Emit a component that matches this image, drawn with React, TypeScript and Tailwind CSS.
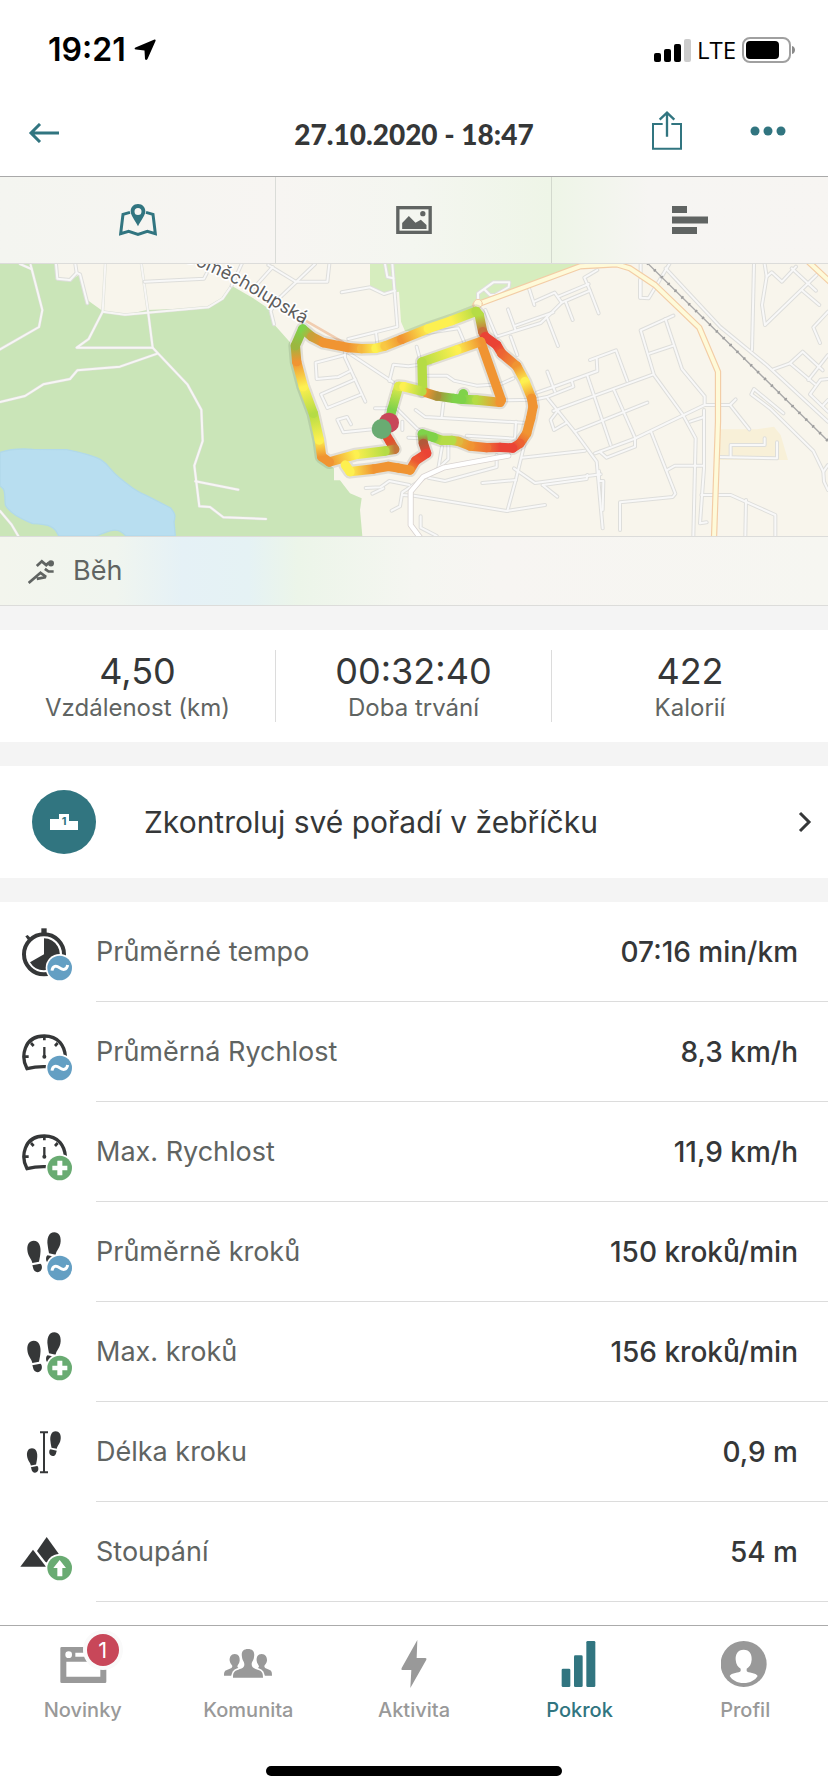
import React from 'react';

type RoutePoint = [number, number, string];

const FOREST_PATHS = [
  '0,283 117,216 127,165 92,30',
  '60,27 94,42',
  '0,441 75,423 130,388 210,372 232,346 360,335 472,296',
  '316,27 308,170 266,252 230,278 458,278 472,293 562,388 604,464 608,558 583,632 598,754 630,756 670,787 798,792',
  '586,679 715,704',
  '308,170 375,179 625,157 668,131 695,92',
  '424,27 445,176 458,278',
  '0,768 34,808 56,845',
];

const STREETS = [
  '168,27 172,71 210,75 230,54 240,58 262,145',
  '226,27 230,54',
  '434,80 612,71 620,55',
  '725,27 695,92',
  '805,30 887,80 982,80 988,27',
  '945,27 832,135 812,168 822,208',
  '818,36 765,95',
  '1025,112 1110,97 1152,117 1185,107',
  '1155,27 1162,66 1180,70',
  '1177,27 1192,215 1045,252',
  '1128,232 1132,265',
  '1035,300 947,323 950,372 1015,366 1053,347',
  '1035,290 1035,308 1096,440',
  '1066,373 963,418 982,459 1084,418',
  '1040,290 1180,382',
  '1168,378 1180,329 1225,334 1270,328 1290,325',
  '1053,508 1041,486 1012,494 1030,532 1125,522',
  '1125,460 1190,460 1250,520 1290,545',
  '1207,500 1207,525',
  '1225,548 1260,550',
  '1097,699 1141,697 1168,678 1228,690',
  '1117,716 1150,700',
  '1175,767 1200,754 1207,712 1315,640 1345,612 1345,570',
  '1207,720 1242,722 1520,768 1635,750',
  '1242,240 1375,220 1392,260',
  '1250,275 1258,305 1258,330',
  '1284,362 1340,362 1362,377 1430,392 1500,388 1540,370',
  '1247,465 1275,486 1570,503',
  '1330,445 1325,486',
  '1400,542 1545,551 1548,500',
  '1315,640 1326,575',
  '1262,784 1262,818 1310,843',
  '1434,145 1434,115 1480,82 1528,82 1526,96 1485,120 1470,120 1455,105',
  '1587,100 1603,150',
  '1603,140 1664,113 1685,143 1658,170 1622,204 1490,245',
  '1524,163 1547,226',
  '1547,212 1660,172',
  '1532,245 1552,300',
  '1456,165 1490,245',
  '1792,45 1753,68 1770,107 1796,175',
  '1675,125 1766,87',
  '1685,143 1770,107',
  '1697,140 1718,195',
  '1640,185 1674,273',
  '1922,27 1922,128 1946,130 2008,27',
  '1920,75 1920,128',
  '1512,436 1600,434 1644,425 1720,395 1716,380',
  '1610,413 1660,396 1792,348 1790,310',
  '1770,315 1848,286 1882,378',
  '1642,350 1665,410',
  '1660,468 1785,422 1960,358',
  '1643,430 1724,530 1790,620 1808,820',
  '1700,503 1662,525 1652,495 1675,465',
  '1762,362 1832,570',
  '1842,405 1906,550',
  '1724,530 1942,443',
  '2020,182 1922,226 1962,360 2048,478 2087,550 2080,843',
  '1996,192 2046,342 2114,424 2114,450 1902,552 1785,595',
  '1948,296 2020,272',
  '1953,530 2026,716 2018,726 1860,742 1860,825',
  '1800,590 1820,608 1905,575 1905,552',
  '1542,640 1605,684 1802,658',
  '1628,690 1760,672 1762,660',
  '1565,608 1755,587',
  '1628,690 1672,725',
  '1797,648 1797,678 1810,678 1808,765',
  '1575,560 1548,672 1522,768',
  '1447,684 1548,675',
  '1490,600 1490,636 1335,678 1285,668',
  '2114,450 2190,450 2248,523',
  '2190,450 2207,433',
  '2112,465 2112,640 2100,805 2120,802',
  '2070,500 2112,486',
  '2000,646 2025,632 2112,632',
  '2104,720 2192,720 2326,780 2326,843',
  '2238,735 2236,843',
  '2154,606 2331,610 2331,562',
  '2192,605 2192,570 2294,570 2294,550',
  '2262,27 2256,285',
  '1997,40 2160,215 2300,330 2484,500',
  '2294,27 2300,65 2286,150 2295,210 2450,60',
  '2300,65 2315,52 2346,80 2388,35',
  '2375,40 2448,107',
  '2405,105 2458,150',
  '2484,170 2440,217 2460,264',
  '2320,343 2370,325 2408,290 2468,346',
  '2370,325 2445,388',
  '2425,375 2484,300',
  '2484,372 2462,374 2430,418 2484,470',
  '2470,450 2484,435',
  '2470,650 2440,588 2310,460 2254,418 2262,402 2350,475',
  '2484,630 2470,650 2472,680 2484,705',
];

const MAIN_ROADS = [
  '1427,150 1740,34 1850,28 1890,40 1965,90 2098,218 2154,350 2154,500 2142,850',
  '2425,20 2500,90',
  '1427,150 1432,165',
];

const WHITE_ROADS = ['1525,602 1330,638 1270,665 1232,710 1232,810 1262,850'];

const GREEN = '#7fd24a';
const LIME = '#b5dc45';
const YELLOW = '#fdf050';
const ORANGE = '#f09432';
const RED = '#ea4335';

const OUTER_ROUTE: RoutePoint[] = [
  [345, 430, RED],
  [360, 455, '#e2502f'],
  [374, 478, '#c4763a'],
  [345, 483, LIME],
  [255, 494, YELLOW],
  [178, 516, ORANGE],
  [155, 500, ORANGE],
  [148, 450, YELLOW],
  [130, 370, LIME],
  [100, 290, YELLOW],
  [80, 215, ORANGE],
  [76, 167, '#9cb63f'],
  [98, 117, GREEN],
  [125, 140, '#c8a13a'],
  [160, 158, ORANGE],
  [235, 173, ORANGE],
  [275, 176, '#f6b83e'],
  [318, 175, YELLOW],
  [345, 168, '#f8c843'],
  [395, 148, ORANGE],
  [475, 116, YELLOW],
  [545, 92, YELLOW],
  [618, 64, LIME],
  [628, 76, LIME],
  [638, 125, '#c8703a'],
  [645, 140, RED],
  [680, 165, RED],
  [695, 190, '#ec6233'],
  [740, 228, ORANGE],
  [765, 275, YELLOW],
  [785, 325, ORANGE],
  [789, 350, ORANGE],
  [782, 385, ORANGE],
  [770, 430, ORANGE],
  [750, 460, '#ec6233'],
  [728, 474, RED],
  [690, 472, RED],
  [650, 473, '#ee7234'],
  [600, 468, ORANGE],
  [565, 454, '#e0b83e'],
  [545, 451, LIME],
  [515, 451, LIME],
  [490, 442, GREEN],
  [457, 432, GREEN],
  [460, 460, '#b3583a'],
  [470, 490, RED],
  [437, 512, '#ec5533'],
  [420, 540, ORANGE],
  [385, 534, ORANGE],
  [355, 529, ORANGE],
  [310, 537, ORANGE],
  [240, 545, YELLOW],
  [226, 525, YELLOW],
];

const INNER_ROUTE: RoutePoint[] = [
  [575, 326, GREEN],
  [580, 312, GREEN],
  [580, 328, GREEN],
  [620, 330, LIME],
  [690, 337, ORANGE],
  [694, 330, ORANGE],
  [632, 155, ORANGE],
  [560, 180, YELLOW],
  [456, 216, LIME],
  [458, 303, LIME],
];

const MIDDLE_ROUTE: RoutePoint[] = [
  [575, 328, GREEN],
  [550, 325, GREEN],
  [500, 318, '#a98f38'],
  [468, 308, ORANGE],
];

const START_ROUTE: RoutePoint[] = [
  [360, 385, GREEN],
  [366, 358, GREEN],
  [386, 289, '#dfe94b'],
  [402, 290, YELLOW],
  [456, 304, LIME],
];

const RouteLine: React.FC<{ id: string; points: RoutePoint[] }> = ({ id, points }) => (
  <g fill="none" strokeLinecap="round" strokeLinejoin="round">
    {points.slice(1).map((to, i) => {
      const from = points[i];
      return (
        <g key={i}>
          <linearGradient id={`${id}-${i}`} gradientUnits="userSpaceOnUse" x1={from[0]} y1={from[1]} x2={to[0]} y2={to[1]}>
            <stop offset="0" stopColor={from[2]} />
            <stop offset="1" stopColor={to[2]} />
          </linearGradient>
          <path d={`M${from[0]} ${from[1]}L${to[0]} ${to[1]}`} stroke={`url(#${id}-${i})`} strokeWidth="28" />
        </g>
      );
    })}
  </g>
);

const toLine = (points: RoutePoint[]) => points.map((p) => `${p[0]},${p[1]}`).join(' ');

const RouteMap: React.FC = () => (
  <svg viewBox="0 27 2484 816" preserveAspectRatio="xMidYMid slice" className="block h-[272px] w-full" role="img" aria-label="Mapa trasy">
    <rect y="27" width="2484" height="816" fill="#f8f5ec" />
    <path
      d="M0 27H165L172 71 210 75 238 60 262 135 308 168 375 180 440 165 625 158 668 131 695 92 760 130 812 165 822 208 870 262 890 360 940 480 960 610 1002 640V676H1020L1050 715 1085 730 1080 765 1087 843H0Z"
      fill="#cae5b8"
    />
    <path d="M1110 27H1750L1427 150V165L1242 228 1215 228 1203 200 1197 110 1152 117 1110 92Z" fill="#d6edbe" />
    <path
      d="M0 592C30 582 60 580 100 583L200 584C240 592 280 602 302 614C330 632 325 642 360 670C390 694 410 710 440 722L512 759C524 775 528 780 522 800L526 843H378C350 812 330 828 288 843H176C165 815 150 808 98 806C60 790 30 775 16 750C14 730 16 710 10 702L0 692Z"
      fill="#b8def0"
      stroke="#b1d9ea"
      strokeWidth="4"
    />
    <path d="M2160 523H2270L2322 515 2342 540 2364 615H2160Z" fill="#f8f0d8" />
    <g fill="none" strokeLinecap="round" strokeLinejoin="round">
      {FOREST_PATHS.map((p) => (
        <polyline key={p} points={p} stroke="#dcdfd6" strokeWidth="9" />
      ))}
      {FOREST_PATHS.map((p) => (
        <polyline key={p} points={p} stroke="#f7f6f5" strokeWidth="6" />
      ))}
      {STREETS.map((p) => (
        <polyline key={p} points={p} stroke="#dededb" strokeWidth="12" />
      ))}
      {STREETS.map((p) => (
        <polyline key={p} points={p} stroke="#f8f8f8" strokeWidth="6" />
      ))}
      {WHITE_ROADS.map((p) => (
        <g key={p}>
          <polyline points={p} stroke="#d9d3d0" strokeWidth="18" />
          <polyline points={p} stroke="#ffffff" strokeWidth="13" />
        </g>
      ))}
      <path d="M905 190L1030 262" stroke="#f1cdb0" strokeWidth="8" />
      {MAIN_ROADS.map((p) => (
        <polyline key={p} points={p} stroke="#f3cda6" strokeWidth="19" />
      ))}
      {MAIN_ROADS.map((p) => (
        <polyline key={p} points={p} stroke="#fefad9" strokeWidth="12" />
      ))}
      <circle cx="1434" cy="146" r="13" fill="#fefad9" stroke="#f3cda6" strokeWidth="3" />
      <path d="M1942 24L2484 558" stroke="#a9a9a9" strokeWidth="4" />
      <path d="M1942 24L2484 558" stroke="#9d9d9d" strokeWidth="9" strokeDasharray="5 24" strokeLinecap="butt" />
    </g>
    <path id="street" d="M450 -20C590 30 680 70 750 112S860 180 912 208" fill="none" />
    <text
      className="fill-[#5d5d5d] stroke-white font-['Inter',sans-serif] text-[54px]"
      strokeWidth="10"
      strokeLinejoin="round"
      paintOrder="stroke"
      textAnchor="end"
    >
      <textPath href="#street" startOffset="100%">
        Doměcholupská
      </textPath>
    </text>
    <g transform="translate(810 105)">
      <g fill="none" stroke="#000000" strokeOpacity="0.09" strokeWidth="42" strokeLinecap="round" strokeLinejoin="round">
        <polyline points={toLine(OUTER_ROUTE)} />
        <polyline points={toLine(INNER_ROUTE)} />
        <polyline points={toLine(START_ROUTE)} />
      </g>
      <RouteLine id="outer" points={OUTER_ROUTE} />
      <RouteLine id="inner" points={INNER_ROUTE} />
      <RouteLine id="middle" points={MIDDLE_ROUTE} />
      <path d="M352 375L372 300" stroke={RED} strokeWidth="6" />
      <RouteLine id="start" points={START_ROUTE} />
      <circle cx="357" cy="398" r="30" fill="#c84759" />
      <circle cx="335" cy="417" r="30" fill="#69ab72" />
    </g>
  </svg>
);

type BadgeKind = 'average' | 'max' | 'up';

const Badge: React.FC<{ kind: BadgeKind }> = ({ kind }) => (
  <g>
    <circle cx="179" cy="203" r="42" fill="#ffffff" />
    <circle cx="179" cy="203" r="37" fill={kind === 'average' ? '#649fc3' : '#69ab72'} />
    {kind === 'average' && (
      <path d="M156 211C158 196 169 195 178 202C188 210 200 210 203 194" fill="none" stroke="#ffffff" strokeWidth="9" />
    )}
    {kind === 'max' && <path d="M172 181H187V196H202V210H187V225H172V210H157V196H172Z" fill="#ffffff" />}
    {kind === 'up' && <path d="M179 179L198 203H187V228H172V203H160Z" fill="#ffffff" />}
  </g>
);

const Foot: React.FC<{ transform?: string }> = ({ transform }) => (
  <g transform={transform}>
    <path d="M101 121C118 121 124 140 121 160C120 170 118 178 117 184L97 188C95 175 83 168 82 148C81 132 88 121 101 121Z" />
    <path d="M97 195L121 190C125 191 127 200 125 206C122 216 110 218 104 212C99 208 100 202 97 195Z" />
  </g>
);

const PaceIcon = () => (
  <g>
    <circle cx="132" cy="162" r="60" fill="none" stroke="#353738" strokeWidth="12" />
    <path d="M132 162V114A48 48 0 1 1 90 186Z" />
    <path d="M124 84H140V102H124Z" />
    <path d="M76 108L83 104 91 112 84 119Z" />
  </g>
);

const SpeedIcon = () => (
  <g fill="none" stroke="#353738">
    <path d="M138 199Q108 198 81 205C62 170 70 107 133 107C176 107 194 138 196 168" strokeWidth="10" />
    <path d="M133 107V120M93 128L101 137M173 128L165 137M72 169H86" strokeWidth="8" />
    <path d="M133 140V168" strokeWidth="7" />
    <circle cx="133" cy="169" r="6" fill="#353738" stroke="none" />
  </g>
);

const StepsIcon = () => (
  <g>
    <Foot />
    <Foot transform="matrix(-1 0 0 1 264 -25)" />
  </g>
);

const StrideIcon = () => (
  <g>
    <Foot transform="matrix(0.78 0 0 0.78 17 49)" />
    <Foot transform="matrix(-0.79 0 0 0.79 247 -3)" />
    <path d="M120 93H144V99H135V213H144V219H120V213H129V99H120Z" />
  </g>
);

const ClimbIcon = () => (
  <g>
    <path d="M61 199L99 148 138 199Z" />
    <path d="M140 110L176 160 150 192 136 184 111 152Z" />
  </g>
);

interface Metric {
  label: string;
  value: string;
  Icon: React.FC;
  badge?: BadgeKind;
}

const METRICS: Metric[] = [
  { label: 'Průměrné tempo', value: '07:16 min/km', Icon: PaceIcon, badge: 'average' },
  { label: 'Průměrná Rychlost', value: '8,3 km/h', Icon: SpeedIcon, badge: 'average' },
  { label: 'Max. Rychlost', value: '11,9 km/h', Icon: SpeedIcon, badge: 'max' },
  { label: 'Průměrně kroků', value: '150 kroků/min', Icon: StepsIcon, badge: 'average' },
  { label: 'Max. kroků', value: '156 kroků/min', Icon: StepsIcon, badge: 'max' },
  { label: 'Délka kroku', value: '0,9 m', Icon: StrideIcon },
  { label: 'Stoupání', value: '54 m', Icon: ClimbIcon, badge: 'up' },
];

const SUMMARY = [
  { label: 'Vzdálenost (km)', value: '4,50' },
  { label: 'Doba trvání', value: '00:32:40' },
  { label: 'Kalorií', value: '422' },
];

const NAV_ITEMS = [
  {
    label: 'Novinky',
    badge: 1,
    icon: (
      <svg viewBox="86 45 144 144" className="size-12" fill="currentColor" fillRule="evenodd">
        <path d="M94 66H224Q228 66 228 70V170Q228 174 224 174H94Q90 174 90 170V70Q90 66 94 66ZM108 110V155H210V110ZM115 79A10 10 0 1 0 115 99A10 10 0 1 0 115 79ZM135 83V95H210V83Z" />
        <path d="M159 60H175V83H159Z" fill="#ffffff" />
      </svg>
    ),
  },
  {
    label: 'Komunita',
    icon: (
      <svg viewBox="582 45 144 144" className="size-12" fill="currentColor">
        <path d="M614 87C626 87 630 97 629 107C628 116 623 119 622 124C622 129 628 130 632 133L615 141C608 145 605 149 604 152H582C582 138 585 137 596 133C604 130 607 128 607 123C606 118 600 116 599 107C598 97 603 87 614 87Z" />
        <path d="M695 87C706 87 712 97 711 107C710 116 704 118 703 123C703 128 706 130 714 133C724 137 726 138 726 152H704C703 149 700 145 694 141L677 133C681 130 687 129 687 124C686 119 681 116 680 107C679 97 683 87 695 87Z" />
        <path
          d="M654 72C669 72 675 81 672 96C671 107 665 110 665 118C665 128 671 130 683 134C696 138 699 143 699 158H609C609 143 612 138 625 134C637 130 643 128 643 118C643 110 637 107 636 96C633 81 639 72 654 72Z"
          stroke="#ffffff"
          strokeWidth="10"
          paintOrder="stroke"
        />
      </svg>
    ),
  },
  {
    label: 'Aktivita',
    icon: (
      <svg viewBox="1078 45 144 144" className="size-12" fill="currentColor">
        <path d="M1160 45L1158 99H1184Q1189 99 1187 104L1139 189 1142 135H1115Q1110 135 1113 129Z" />
      </svg>
    ),
  },
  {
    label: 'Pokrok',
    active: true,
    icon: (
      <svg viewBox="467 45 144 144" className="size-12" fill="currentColor">
        <rect x="484" y="131" width="26" height="55" rx="4" />
        <rect x="521" y="91" width="26" height="95" rx="4" />
        <rect x="558" y="48" width="27" height="138" rx="4" />
      </svg>
    ),
  },
  {
    label: 'Profil',
    icon: (
      <svg viewBox="964 45 144 144" className="size-12" fill="currentColor">
        <circle cx="1032" cy="117" r="69" />
        <path
          d="M1032 74C1050 74 1057 88 1056 104C1055 118 1049 126 1041 131V138C1044 144 1070 143 1074 153C1066 166 1052 174 1032 174S998 166 990 153C994 143 1020 144 1023 138V131C1015 126 1009 118 1008 104C1007 88 1014 74 1032 74Z"
          fill="#ffffff"
        />
      </svg>
    ),
  },
];

const StatusBar: React.FC = () => (
  <div className="flex h-[100px] items-center justify-between pl-12 pr-8">
    <div className="flex items-center gap-2 text-[32px] leading-10 font-semibold text-black">
      <span>19:21</span>
      <svg viewBox="0 0 22 22" className="size-[22px]" fill="currentColor">
        <path d="M20.500 0.500Q22 0.200 21.500 2L13.500 20Q12 22 11 20L10.500 11.500 2 10.500Q-0.500 10 1.500 8.500Z" />
      </svg>
    </div>
    <div className="flex items-center gap-1.5 text-black">
      <svg viewBox="0 0 37 23" className="h-[23px] w-[37px]" fill="currentColor">
        <rect y="14" width="7" height="9" rx="2" />
        <rect x="10" y="10" width="7" height="13" rx="2" />
        <rect x="20" y="5" width="7" height="18" rx="2" />
        <rect x="30" width="7" height="23" rx="2" fill="#cccccc" />
      </svg>
      <span className="font-['Open_Sans',sans-serif] text-[24px] leading-8 font-medium">LTE</span>
      <svg viewBox="0 0 54 26" className="h-[26px] w-[54px]">
        <rect x="1" y="1" width="47" height="24" rx="7" fill="none" stroke="#a0a0a0" strokeWidth="2" />
        <rect x="4" y="4" width="33" height="18" rx="4" fill="#000000" />
        <path d="M50 9C54 10 54 16 50 17Z" fill="#8a8a8a" />
      </svg>
    </div>
  </div>
);

const App: React.FC = () => {
  return (
    <div className="flex min-h-screen flex-col bg-white font-['Inter',sans-serif] text-[#353738]">
      <StatusBar />

      <header className="grid h-[77px] grid-cols-[1fr_auto_1fr] items-start border-b border-[#a9a9a9] px-7 pt-[11px] text-[#317580]">
        <button type="button" aria-label="Zpět" className="flex h-11 items-center justify-self-start">
          <svg viewBox="0 0 32 20" className="h-5 w-8" fill="none" stroke="currentColor" strokeWidth="3">
            <path d="M31 10H4M12 1L3 10 12 19" />
          </svg>
        </button>
        <h1 className="font-['Lato',sans-serif] text-[28px] leading-[46px] font-black text-[#353738]">27.10.2020 - 18:47</h1>
        <div className="flex items-center justify-end gap-[68px] pr-3.5">
          <button type="button" aria-label="Sdílet">
            <svg viewBox="708 333 90 117" className="h-[39px] w-[30px]" fill="none" stroke="currentColor">
              <path d="M740 372H711V446H795V372H766" strokeWidth="6" />
              <path d="M753 410V340M731 359L753 338 775 359" strokeWidth="7" />
            </svg>
          </button>
          <button type="button" aria-label="Další možnosti">
            <svg viewBox="0 0 36 12" className="h-3 w-9" fill="currentColor">
              <circle cx="5" cy="6" r="4.500" />
              <circle cx="18" cy="6" r="4.500" />
              <circle cx="31" cy="6" r="4.500" />
            </svg>
          </button>
        </div>
      </header>

      <div className="grid h-[87px] grid-cols-3 border-b border-[#dcdcda] text-[#606462]">
        <button
          type="button"
          aria-label="Mapa"
          className="flex items-center justify-center border-r border-[#dadcd8] bg-linear-to-r from-[#f4f5f0] to-[#f7f5f2] text-[#317580]"
        >
          <svg viewBox="357 609 114 96" className="h-8 w-[38px]">
            <path d="M390 634L369 640 362 698 386 691 414 700 442 691 466 698 459 640 438 634" fill="none" stroke="currentColor" strokeWidth="9" />
            <path
              d="M414 609C400 609 392 619 392 631C392 644 405 658 414 676C423 658 436 644 436 631C436 619 428 609 414 609ZM414 621A10 10 0 1 1 414 642A10 10 0 1 1 414 621Z"
              fill="currentColor"
              fillRule="evenodd"
            />
          </svg>
        </button>
        <button
          type="button"
          aria-label="Fotografie"
          className="flex items-center justify-center border-r border-[#d3d9ce] bg-linear-to-r from-[#f7f5f2] via-[#f4f6f0] to-[#eef5e7]"
        >
          <svg viewBox="1188 618 107 84" className="h-7 w-9" fill="currentColor">
            <rect x="1193" y="623" width="97" height="74" fill="none" stroke="currentColor" strokeWidth="10" />
            <path d="M1206 687V669L1226 648 1246 668 1262 659 1279 675V687Z" />
            <circle cx="1268" cy="641" r="8" />
          </svg>
        </button>
        <button
          type="button"
          aria-label="Grafy"
          className="flex items-center justify-center bg-linear-to-r from-[#eef5e7] via-[#f6f5f2] via-35% to-[#f7f5f2]"
        >
          <svg viewBox="0 0 36 28" className="h-7 w-9" fill="currentColor">
            <path d="M0 0H15V7H0ZM0 10.500H36V17.500H0ZM0 21H25V28H0Z" />
          </svg>
        </button>
      </div>

      <RouteMap />

      <div className="flex h-[70px] items-center gap-[18px] border-y border-[#dcdcda] bg-[linear-gradient(90deg,#f3f5ed_0%,#f0f5ef_14%,#e5f1f6_22%,#e5f2f4_30%,#ecf5e9_36%,#f5f6f1_50%,#f7f5f2_60%,#f6f6f1_100%)] px-7 text-[#606462]">
        <svg viewBox="83 917 80 74" className="h-[25px] w-[27px]" fill="none" stroke="currentColor" strokeWidth="8">
          <circle cx="151" cy="930" r="9" fill="currentColor" stroke="none" />
          <path d="M109 938L124 924 137 935 144 928M85 988L121 957M117 956L134 968 133 971 109 976M133 946L144 954H159" />
        </svg>
        <span className="text-[27px] leading-9">Běh</span>
      </div>

      <div className="h-6 bg-[#f4f4f4]" />

      <section className="grid h-28 grid-cols-3 items-center divide-x divide-[#dcdcdc]">
        {SUMMARY.map((item) => (
          <div key={item.label} className="flex h-18 flex-col items-center">
            <span className="text-[36px] leading-[43px]">{item.value}</span>
            <span className="text-[24px] leading-[30px] text-[#606462]">{item.label}</span>
          </div>
        ))}
      </section>

      <div className="h-6 bg-[#f4f4f4]" />

      <button type="button" className="flex h-28 items-center pl-8 pr-4 text-left">
        <span className="flex size-16 items-center justify-center rounded-full bg-[#317580]">
          <svg viewBox="0 0 28 16" className="h-4 w-7">
            <path d="M0 5H9V0H19V7H28V16H0Z" fill="#ffffff" />
            <text x="14" y="11" textAnchor="middle" className="fill-[#317580] font-['Inter',sans-serif] text-[11px] font-bold">
              1
            </text>
          </svg>
        </span>
        <span className="ml-12 flex-1 text-[30px] leading-10">Zkontroluj své pořadí v žebříčku</span>
        <svg viewBox="0 0 14 22" className="h-[22px] w-[14px]" fill="none" stroke="currentColor" strokeWidth="3">
          <path d="M2 2L11 11 2 20" />
        </svg>
      </button>

      <div className="h-6 bg-[#f4f4f4]" />

      <ul>
        {METRICS.map(({ label, value, Icon, badge }) => (
          <li key={label} className="flex h-[100px] items-center pl-5">
            <svg viewBox="60 65 156 180" className="h-[60px] w-[52px]" fill="#353738">
              <Icon />
              {badge && <Badge kind={badge} />}
            </svg>
            <div className="ml-6 flex h-full flex-1 items-center justify-between border-b border-[#dcdcdc] pr-[30px] leading-9">
              <span className="text-[27px] text-[#606462]">{label}</span>
              <span className="text-[28px] font-medium">{value}</span>
            </div>
          </li>
        ))}
      </ul>

      <footer className="mt-auto flex flex-col items-center border-t border-[#ababab] pb-4">
        <nav className="grid w-full grid-cols-5 pt-[14px] pb-[42px]">
          {NAV_ITEMS.map((item) => (
            <a
              key={item.label}
              href="#"
              aria-current={item.active ? 'page' : undefined}
              className={`flex flex-col items-center gap-2 text-[20px] leading-7 font-medium ${item.active ? 'text-[#317580]' : 'text-[#999999]'}`}
            >
              <span className="relative">
                {item.icon}
                {item.badge && (
                  <span className="absolute -top-1.5 -right-3 flex size-8 items-center justify-center rounded-full bg-[#c84759] text-[22px] leading-8 font-normal text-white ring-4 ring-[#fafafa]">
                    {item.badge}
                  </span>
                )}
              </span>
              {item.label}
            </a>
          ))}
        </nav>
        <div className="h-[10px] w-[296px] rounded-full bg-black" />
      </footer>
    </div>
  );
};

export default App;
